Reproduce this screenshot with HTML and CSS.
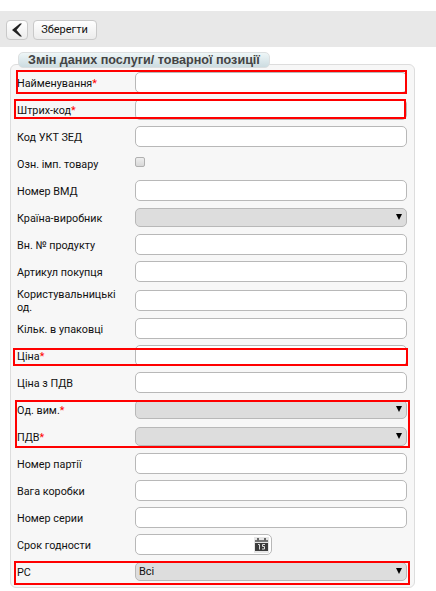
FILE: index.html
```html
<!DOCTYPE html>
<html lang="uk">
<head>
<meta charset="utf-8">
<title>Змін даних послуги/ товарної позиції</title>
<link rel="stylesheet" href="styles.css">
</head>
<body>
<header class="toolbar">
  <button class="btn btn-back" aria-label="Назад"><svg width="12" height="14" viewBox="0 0 12 14"><path d="M11 .5 L9 .5 L1 7 L9 13.500 L11 13.500 L5.500 7 Z" fill="#222"/></svg></button>
  <button class="btn btn-save">Зберегти</button>
</header>
<main class="panel">
  <h1 class="legend">Змін даних послуги/ товарної позиції</h1>
  <div class="row"><label>Найменування<b>*</b></label><input class="field"></div>
  <div class="row"><label>Штрих-код<b>*</b></label><input class="field"></div>
  <div class="row"><label>Код УКТ ЗЕД</label><input class="field"></div>
  <div class="row"><label>Озн. імп. товару</label><span class="check"></span></div>
  <div class="row"><label>Номер ВМД</label><input class="field"></div>
  <div class="row"><label>Країна-виробник</label><div class="select"><span></span><i class="arrow"></i></div></div>
  <div class="row"><label>Вн. № продукту</label><input class="field"></div>
  <div class="row"><label>Артикул покупця</label><input class="field"></div>
  <div class="row row-tall"><label>Користувальницькі од.</label><input class="field"></div>
  <div class="row"><label>Кільк. в упаковці</label><input class="field"></div>
  <div class="row"><label>Ціна<b>*</b></label><input class="field"></div>
  <div class="row"><label>Ціна з ПДВ</label><input class="field"></div>
  <div class="row"><label>Од. вим.<b>*</b></label><div class="select"><span></span><i class="arrow"></i></div></div>
  <div class="row"><label>ПДВ<b>*</b></label><div class="select"><span></span><i class="arrow"></i></div></div>
  <div class="row"><label>Номер партії</label><input class="field"></div>
  <div class="row"><label>Вага коробки</label><input class="field"></div>
  <div class="row"><label>Номер серии</label><input class="field"></div>
  <div class="row"><label>Срок годности</label><div class="field date"><span class="date-btn"><svg width="13" height="13" viewBox="0 0 13 13"><path d="M0 2h13v2H0z" fill="#777"/><path d="M2 0h2v3H2zM9 0h2v3H9z" fill="#666"/><path d="M0 5h13v8H0z" fill="#3c3c3c"/><path d="M3 6.500h1.500v5M10 6.500H7.500v2H9.500v2.500H7" fill="none" stroke="#ddd"/></svg></span></div></div>
  <div class="row"><label>РС</label><div class="select"><span class="value">Всі</span><i class="arrow"></i></div></div>
</main>
<div class="mark mark-name"></div>
<div class="mark mark-barcode"></div>
<div class="mark mark-price"></div>
<div class="mark mark-units"></div>
<div class="mark mark-rs"></div>
</body>
</html>
```
FILE: styles.css
```css
* { box-sizing: border-box; }
body {
  margin: 0;
  padding-top: 11px;
  height: 591px;
  overflow: hidden;
  position: relative;
  background: #fff;
  color: #111;
  font: 11px/13px Roboto, sans-serif;
}
.toolbar {
  display: flex;
  gap: 5px;
  height: 36px;
  padding: 9px 6px 0;
  background: #e8e8e8;
}
.btn {
  display: flex;
  align-items: center;
  justify-content: center;
  height: 20px;
  padding: 0;
  border: 1px solid #c9c9c9;
  border-radius: 4px;
  background: linear-gradient(#fff, #ececec);
  color: #111;
  font: inherit;
}
.btn-back { width: 22px; }
.btn-save { width: 64px; padding: 0 1px 1px 0; }
.panel {
  width: 405px;
  height: 524px;
  margin: 17px 0 0 10px;
  padding: 0 7px 0 6px;
  border: 1px solid #ddd;
  border-radius: 6px;
  background: #f7f7f7;
}
.legend {
  width: 252px;
  height: 16px;
  margin: -13px 0 1px 1px;
  border: 1px solid #dcdfe0;
  border-radius: 5px;
  background: linear-gradient(#eef6f7, #ccdce1);
  color: #444;
  font: bold 12.6px/15px "Liberation Sans", sans-serif;
  text-align: center;
  white-space: nowrap;
}
.row {
  display: grid;
  grid-template-columns: 118px 272px;
  align-items: center;
  height: 27px;
}
.row-tall { height: 30px; }
label { width: 105px; padding-top: 1px; font-size: 10.8px; }
label b { color: #f00; font-weight: normal; }
.field {
  width: 272px;
  height: 21px;
  padding: 0 4px;
  border: 1px solid #b8b8b8;
  border-radius: 5px;
  background: #fff;
  font: inherit;
}
.select {
  display: flex;
  align-items: center;
  justify-content: space-between;
  height: 19px;
  padding: 0 4px 2px 3px;
  border: 1px solid #b8b8b8;
  border-radius: 5px;
  background: #ddd;
}
.value { padding-top: 2px; }
.arrow {
  border: solid transparent;
  border-width: 6px 3px 0;
  border-top-color: #000;
}
.check {
  width: 10px;
  height: 10px;
  margin-bottom: 4px;
  border: 1px solid #b0b0b0;
  border-radius: 2px;
  background: linear-gradient(#eee, #d8d8d8);
}
.date {
  display: flex;
  align-items: center;
  justify-content: flex-end;
  width: 137px;
  padding: 0 2px;
}
.date-btn {
  display: flex;
  align-items: center;
  justify-content: center;
  width: 15px;
  height: 16px;
  background: #e6e6e6;
}
.mark {
  position: absolute;
  border: 2px solid #f00;
}
.mark-name { left: 16px; top: 70px; width: 391px; height: 24px; }
.mark-barcode { left: 14px; top: 99px; width: 392px; height: 20px; }
.mark-price { left: 13px; top: 348px; width: 395px; height: 18px; }
.mark-units { left: 15px; top: 400px; width: 395px; height: 48px; }
.mark-rs { left: 14px; top: 561px; width: 396px; height: 24px; }
```
